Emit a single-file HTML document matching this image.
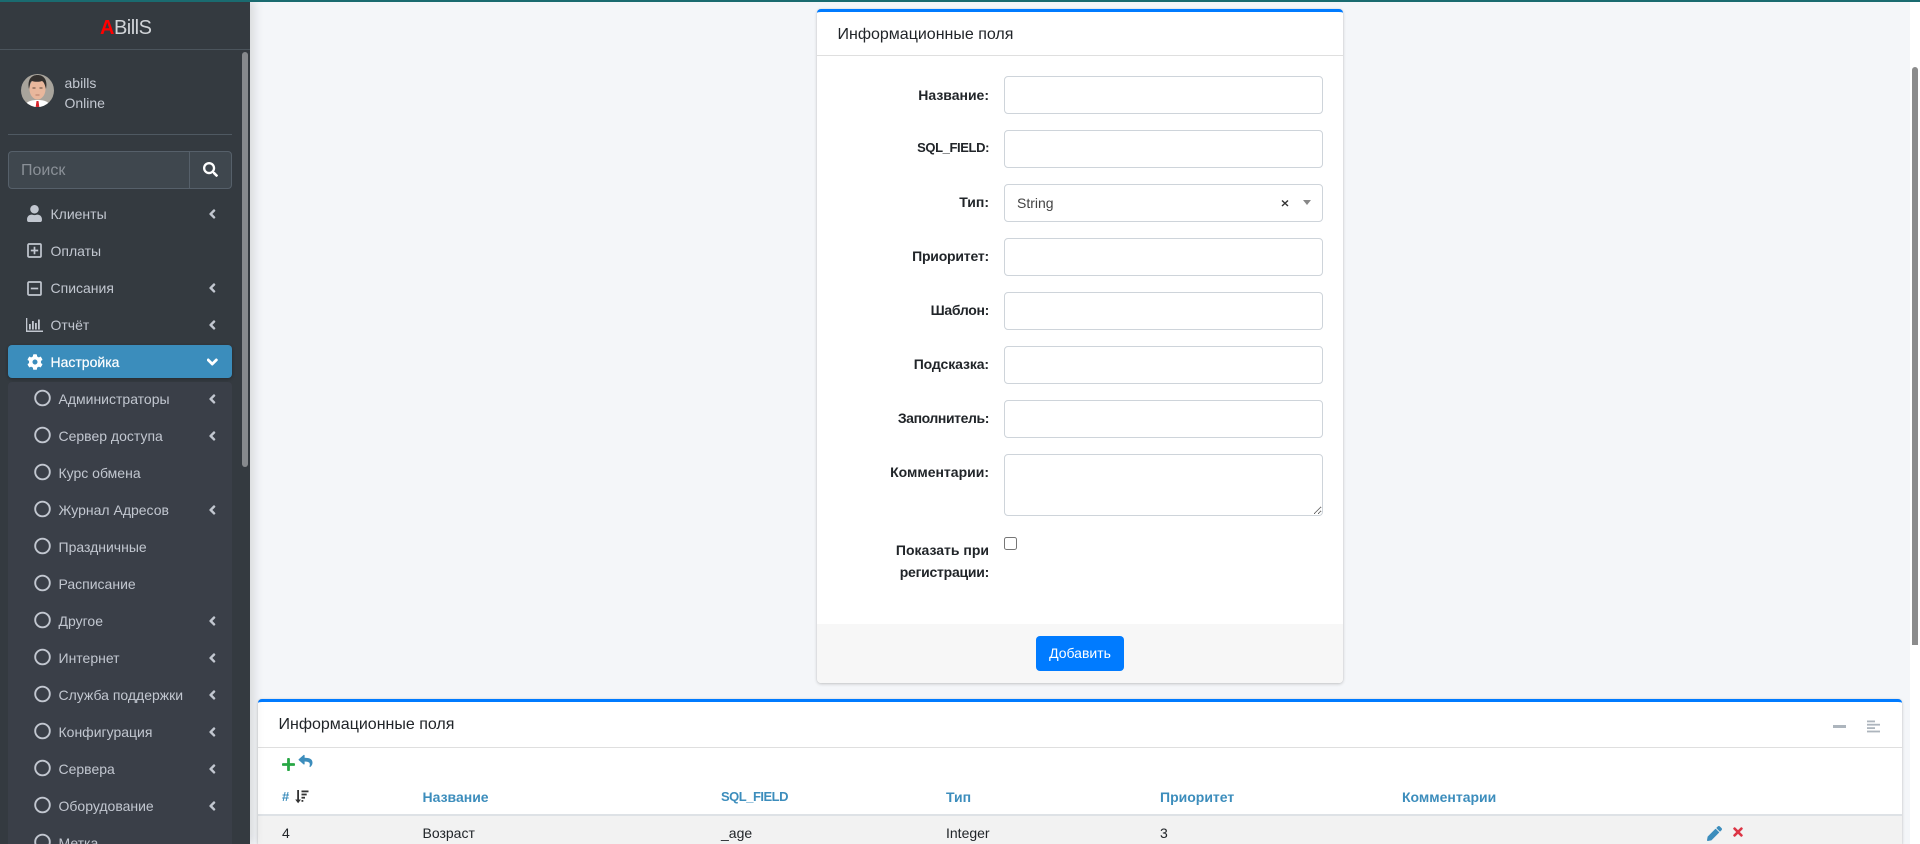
<!DOCTYPE html>
<html lang="ru"><head><meta charset="utf-8"><title>ABillS</title>
<style>
*{box-sizing:border-box}
html,body{margin:0;padding:0;width:1920px;height:844px;overflow:hidden;background:#f4f6f9;font-family:"Liberation Sans","Noto Sans CJK SC",sans-serif;font-size:14px;color:#212529}
#root{position:absolute;left:0;top:0;width:1920px;height:844px;overflow:hidden;background:#f4f6f9}
.a{position:absolute}
.t{position:absolute;white-space:nowrap;line-height:20px;height:20px}
#top{position:absolute;left:0;top:0;width:1920px;height:2px;background:#1a6b70;z-index:9}
#sb{position:absolute;left:0;top:0;width:250px;height:844px;background:#343a40;box-shadow:4px 0 10px rgba(0,0,0,.12);overflow:hidden;color:#c2c7d0}
#track{position:absolute;left:1910px;top:0;width:10px;height:844px;background:#fff}
#thumb{position:absolute;left:1912px;top:67px;width:6px;height:578px;background:#8c8c8c;border-radius:3px 3px 0 0}
.lb{position:absolute;right:931px;text-align:right;font-weight:700;white-space:nowrap;line-height:22px}
.in{position:absolute;left:1004px;width:318.5px;height:38px;border:1px solid #ced4da;border-radius:4px;background:#fff;padding:0;margin:0}
.th{position:absolute;top:787px;font-weight:700;color:#3c8dbc;line-height:20px;white-space:nowrap}
.td{position:absolute;top:823px;line-height:20px;white-space:nowrap}
.card{position:absolute;background:#fff;border-top:3px solid #007bff;border-radius:4px;box-shadow:0 0 1px rgba(0,0,0,.125),0 1px 3px rgba(0,0,0,.2)}
svg{position:absolute;display:block}
</style></head><body>
<div id="root">
<div id="top"></div>

<!-- card 1 -->
<div class="card" style="left:817px;top:9px;width:526px;height:674px"></div>
<div class="a" style="left:817px;top:55px;width:526px;height:1px;background:#dfdfdf"></div>
<div class="t" style="left:837.5px;top:25px;font-size:16px;color:#212529">Информационные поля</div>
<div class="lb" style="top:84px">Название:</div>
<div class="lb" style="top:137px;font-size:13px;letter-spacing:-.4px">SQL_FIELD:</div>
<div class="lb" style="top:191px">Тип:</div>
<div class="lb" style="top:245px;letter-spacing:-.2px">Приоритет:</div>
<div class="lb" style="top:299px;letter-spacing:-.3px">Шаблон:</div>
<div class="lb" style="top:353px;letter-spacing:-.1px">Подсказка:</div>
<div class="lb" style="top:407px;letter-spacing:-.4px">Заполнитель:</div>
<div class="lb" style="top:461px">Комментарии:</div>
<div class="lb" style="top:539px">Показать при</div>
<div class="lb" style="top:561px;letter-spacing:-.25px">регистрации:</div>
<input class="in" style="top:76px">
<input class="in" style="top:130px">
<div class="in" style="top:184px"></div>
<div class="t" style="left:1017px;top:193px;color:#444">String</div>
<svg style="left:1281px;top:199px" width="8" height="8" viewBox="0 0 8 8"><path d="M1 1.5L7 7M7 1.5L1 7" stroke="#333" stroke-width="1.4"/></svg>
<svg style="left:1303px;top:200px" width="8" height="5" viewBox="0 0 8 5"><path d="M0 0H8L4 5Z" fill="#888"/></svg>
<input class="in" style="top:238px">
<input class="in" style="top:292px">
<input class="in" style="top:346px">
<input class="in" style="top:400px">
<textarea class="in" style="top:454px;height:62px"></textarea>
<input type="checkbox" class="a" style="left:1004px;top:537px;width:13px;height:13px;margin:0">
<div class="a" style="left:817px;top:624px;width:526px;height:59px;background:#f7f7f7;border-radius:0 0 4px 4px"></div>
<div class="a" style="left:1036px;top:636px;width:88px;height:35px;background:#007bff;border-radius:4px;color:#fff;text-align:center;line-height:35px">Добавить</div>

<!-- card 2 -->
<div class="card" style="left:258px;top:699px;width:1644px;height:145px;border-radius:4px 4px 0 0"></div>
<div class="a" style="left:258px;top:747px;width:1644px;height:1px;background:#dfdfdf"></div>
<div class="t" style="left:278.5px;top:715px;font-size:16px">Информационные поля</div>
<div class="a" style="left:1833px;top:725px;width:13px;height:3px;background:#adb5bd"></div>
<svg style="left:1867px;top:720px" width="13" height="13" viewBox="0 0 13 13" fill="#adb5bd"><rect x="0" y="0.5" width="8" height="1.8"/><rect x="0" y="3.8" width="13" height="1.8"/><rect x="0" y="7.2" width="8" height="1.8"/><rect x="0" y="10.6" width="13" height="1.8"/></svg>
<svg style="left:282px;top:757px" width="13" height="15" viewBox="0 0 448 512"><path fill="#28a745" d="M416 208H272V64c0-17.67-14.33-32-32-32h-32c-17.67 0-32 14.33-32 32v144H32c-17.67 0-32 14.33-32 32v32c0 17.67 14.33 32 32 32h144v144c0 17.67 14.33 32 32 32h32c17.67 0 32-14.33 32-32V304h144c17.67 0 32-14.33 32-32v-32c0-17.67-14.33-32-32-32z"/></svg>
<svg style="left:298px;top:754px" width="15" height="14" viewBox="0 0 512 512"><path fill="#3c8dbc" d="M8.309 189.836L184.313 37.851C199.719 24.546 224 35.347 224 56.015v80.053c160.629 1.839 288 34.032 288 186.258 0 61.441-39.581 122.309-83.333 154.132-13.653 9.931-33.111-2.533-28.077-18.631 45.344-145.012-21.507-183.51-176.59-185.742V360c0 20.7-24.3 31.453-39.687 18.164l-176.004-152c-11.071-9.562-11.086-26.753 0-36.328z"/></svg>
<div class="th" style="left:282px;font-size:13px">#</div>
<svg style="left:295px;top:790px" width="14" height="14" viewBox="0 0 14 14" fill="#333"><path d="M2.2 0h1.8v9.5h2L3.1 13.2 0.2 9.5h2z"/><rect x="6.5" y="0.5" width="7" height="1.8"/><rect x="6.5" y="3.6" width="5.2" height="1.8"/><rect x="6.5" y="6.8" width="3.5" height="1.8"/><rect x="6.5" y="10" width="1.8" height="1.8"/></svg>
<div class="th" style="left:422.5px">Название</div>
<div class="th" style="left:721px;font-size:13px;letter-spacing:-.5px">SQL_FIELD</div>
<div class="th" style="left:946px">Тип</div>
<div class="th" style="left:1160px">Приоритет</div>
<div class="th" style="left:1402px">Комментарии</div>
<div class="a" style="left:258px;top:814px;width:1644px;height:2px;background:#dee2e6"></div>
<div class="a" style="left:258px;top:816px;width:1644px;height:28px;background:#f2f2f2"></div>
<div class="td" style="left:282px">4</div>
<div class="td" style="left:422.5px">Возраст</div>
<div class="td" style="left:721px">_age</div>
<div class="td" style="left:946px">Integer</div>
<div class="td" style="left:1160px">3</div>
<svg style="left:1707px;top:826px" width="15" height="15" viewBox="0 0 512 512"><path fill="#3c8dbc" d="M497.9 142.1l-46.1 46.1c-4.7 4.7-12.3 4.7-17 0l-111-111c-4.7-4.7-4.7-12.3 0-17l46.1-46.1c18.7-18.7 49.1-18.7 67.9 0l60.1 60.1c18.8 18.7 18.8 49.1 0 67.9zM284.2 99.8L21.6 362.4.4 483.9c-2.9 16.4 11.4 30.6 27.8 27.8l121.5-21.3 262.6-262.6c4.7-4.7 4.7-12.3 0-17l-111-111c-4.8-4.7-12.4-4.7-17.1 0z"/></svg>
<svg style="left:1733px;top:825px" width="10" height="14" viewBox="0 0 352 512"><path fill="#dc3545" d="M242.72 256l100.07-100.07c12.28-12.28 12.28-32.19 0-44.48l-22.24-22.24c-12.28-12.28-32.19-12.28-44.48 0L176 189.28 75.93 89.21c-12.28-12.28-32.19-12.28-44.48 0L9.21 111.45c-12.28 12.28-12.28 32.19 0 44.48L109.28 256 9.21 356.07c-12.28 12.28-12.28 32.19 0 44.48l22.24 22.24c12.28 12.28 32.2 12.28 44.48 0L176 322.72l100.07 100.07c12.28 12.28 32.2 12.28 44.48 0l22.24-22.24c12.28-12.28 12.28-32.19 0-44.48L242.72 256z"/></svg>

<div id="track"></div><div id="thumb"></div>

<!-- sidebar -->
<div id="sb">
<div class="t" style="left:100px;top:16px;font-size:20px;line-height:24px;height:24px;color:#d0d3d7;letter-spacing:-.5px"><b style="color:#f00">A</b>BillS</div>
<div class="a" style="left:0;top:49px;width:250px;height:1px;background:#4b545c"></div>
<svg style="left:21px;top:74px" width="33" height="33" viewBox="0 0 33 33"><defs><clipPath id="c"><circle cx="16.5" cy="16.5" r="16.5"/></clipPath></defs><g clip-path="url(#c)"><rect width="33" height="33" fill="#a8a49c"/><path d="M3 33c2-6 8-7 13.5-7S28 27 30 33z" fill="#fff"/><path d="M15.5 27h2l.8 6h-3.6z" fill="#d8232a"/><ellipse cx="16.5" cy="15" rx="8" ry="10.5" fill="#e8b79c"/><path d="M8 15C6 5 11 1 16.5 1S27 5 25 15c-1-4-2-7-4-8-3 1-7 1-10 0-2 1-2 4-3 8z" fill="#33302e"/><path d="M11.5 14h3M18.5 14h3" stroke="#5a4538"/><path d="M14.5 21h4" stroke="#b67c68"/></g></svg>
<div class="t" style="left:64.5px;top:73px">abills</div>
<div class="t" style="left:64.5px;top:93px">Online</div>
<div class="a" style="left:8px;top:134px;width:224px;height:1px;background:#4f5962"></div>
<div class="a" style="left:8px;top:151px;width:224px;height:38px;background:#3f474e;border:1px solid #56606a;border-radius:4px"></div>
<div class="a" style="left:189px;top:152px;width:1px;height:36px;background:#56606a"></div>
<div class="t" style="left:21px;top:161px;font-size:16px;color:#8a9097">Поиск</div>
<svg style="left:203px;top:162px" width="15" height="15" viewBox="0 0 512 512"><path fill="#fff" d="M505 442.7L405.3 343c-4.5-4.5-10.6-7-17-7H372c27.6-35.3 44-79.7 44-128C416 93.1 322.9 0 208 0S0 93.1 0 208s93.1 208 208 208c48.3 0 92.7-16.4 128-44v16.3c0 6.4 2.5 12.5 7 17l99.7 99.7c9.4 9.4 24.6 9.4 33.9 0l28.3-28.3c9.4-9.4 9.4-24.6.1-34zM208 336c-70.7 0-128-57.2-128-128 0-70.7 57.2-128 128-128 70.7 0 128 57.2 128 128 0 70.7-57.2 128-128 128z"/></svg>

<svg style="left:27px;top:205px" width="15" height="17" viewBox="0 0 448 512"><path fill="#c2c7d0" d="M224 256c70.7 0 128-57.3 128-128S294.7 0 224 0 96 57.3 96 128s57.3 128 128 128zm89.6 32h-16.7c-22.2 10.2-46.9 16-72.9 16s-50.6-5.8-72.9-16h-16.7C60.2 288 0 348.2 0 422.4V464c0 26.5 21.5 48 48 48h352c26.5 0 48-21.5 48-48v-41.6c0-74.2-60.2-134.4-134.4-134.4z"/></svg>
<div class="t" style="left:50.5px;top:204px">Клиенты</div>
<svg style="left:27px;top:243px" width="15" height="15" viewBox="0 0 15 15"><rect x="1" y="1" width="13" height="13" rx="1" fill="none" stroke="#c2c7d0" stroke-width="1.7"/><path d="M7.5 3.8v7.4M3.8 7.5h7.4" stroke="#c2c7d0" stroke-width="1.7"/></svg>
<div class="t" style="left:50.5px;top:241px">Оплаты</div>
<svg style="left:27px;top:281px" width="15" height="15" viewBox="0 0 15 15"><rect x="1" y="1" width="13" height="13" rx="1" fill="none" stroke="#c2c7d0" stroke-width="1.7"/><path d="M3.8 7.5h7.4" stroke="#c2c7d0" stroke-width="1.7"/></svg>
<div class="t" style="left:50.5px;top:278px">Списания</div>
<svg style="left:26px;top:318px" width="17" height="14" viewBox="0 0 17 14" fill="#c2c7d0"><rect x="0" y="0" width="1.3" height="14"/><rect x="0" y="12.5" width="17" height="1.5"/><rect x="3" y="6" width="1.8" height="5.5"/><rect x="6" y="3" width="1.8" height="8.5"/><rect x="9" y="5" width="1.8" height="6.5"/><rect x="12" y="1.5" width="1.8" height="10"/></svg>
<div class="t" style="left:50.5px;top:315px">Отчёт</div>

<div class="a" style="left:8px;top:345px;width:224px;height:33px;background:#3b8dbc;border-radius:4px;box-shadow:0 1px 3px rgba(0,0,0,.3)"></div>
<svg style="left:26.5px;top:354px" width="16" height="16" viewBox="0 0 512 512"><path fill="#fff" d="M487.4 315.7l-42.6-24.6c4.3-23.2 4.3-47 0-70.2l42.6-24.6c4.9-2.8 7.1-8.6 5.5-14-11.1-35.6-30-67.8-54.7-94.6-3.8-4.1-10-5.1-14.8-2.3L380.8 110c-17.9-15.4-38.5-27.3-60.8-35.1V25.8c0-5.6-3.9-10.5-9.4-11.7-36.7-8.2-74.3-7.8-109.2 0-5.5 1.2-9.4 6.1-9.4 11.7V75c-22.2 7.9-42.8 19.8-60.8 35.1L88.7 85.5c-4.9-2.8-11-1.9-14.8 2.3-24.7 26.7-43.6 58.9-54.7 94.6-1.7 5.4.6 11.2 5.5 14L67.3 221c-4.3 23.2-4.3 47 0 70.2l-42.6 24.6c-4.9 2.8-7.1 8.6-5.5 14 11.1 35.6 30 67.8 54.7 94.6 3.8 4.1 10 5.1 14.8 2.3l42.6-24.6c17.9 15.4 38.5 27.3 60.8 35.1v49.2c0 5.6 3.9 10.5 9.4 11.7 36.7 8.2 74.3 7.8 109.2 0 5.5-1.2 9.4-6.1 9.4-11.7v-49.2c22.2-7.9 42.8-19.8 60.8-35.1l42.6 24.6c4.9 2.8 11 1.9 14.8-2.3 24.7-26.7 43.6-58.9 54.7-94.6 1.5-5.5-.7-11.3-5.6-14.1zM256 336c-44.1 0-80-35.9-80-80s35.9-80 80-80 80 35.9 80 80-35.9 80-80 80z"/></svg>
<div class="t" style="left:50.5px;top:352px;color:#fff;font-weight:500;-webkit-text-stroke:.2px #fff">Настройка</div>
<svg style="left:207px;top:356px" width="10.5" height="12" viewBox="0 0 448 512"><path fill="#fff" stroke="#fff" stroke-width="40" d="M207.029 381.476L12.686 187.132c-9.373-9.373-9.373-24.569 0-33.941l22.667-22.667c9.357-9.357 24.522-9.375 33.901-.04L224 284.505l154.745-154.021c9.379-9.335 24.544-9.317 33.901.04l22.667 22.667c9.373 9.373 9.373 24.569 0 33.941L240.971 381.476c-9.373 9.372-24.569 9.372-33.942 0z"/></svg>

<div class="a" style="left:8px;top:382px;width:224px;height:470px;background:#3a3f48;border-radius:4px 4px 0 0"></div>

<svg style="left:0;top:0" width="250" height="844" viewBox="0 0 250 844"><defs>
<path id="cl" d="M34.52 239.03L228.87 44.69c9.37-9.37 24.57-9.37 33.94 0l22.67 22.67c9.36 9.36 9.37 24.52.04 33.9L131.49 256l154.02 154.75c9.34 9.38 9.32 24.54-.04 33.9l-22.67 22.67c-9.37 9.37-24.57 9.37-33.94 0L34.52 272.97c-9.37-9.37-9.37-24.57 0-33.94z" fill="#c2c7d0" stroke="#c2c7d0" stroke-width="45"/>
<g id="ch"><use href="#cl" transform="translate(209.2,-5) scale(.0195)"/></g>
<circle id="o" cx="42.5" cy="0" r="7.3" fill="none" stroke="#c2c7d0" stroke-width="1.9"/>
</defs>
<g transform="translate(0,214)"><use href="#ch"/></g>
<g transform="translate(0,288)"><use href="#ch"/></g>
<g transform="translate(0,325)"><use href="#ch"/></g>
<g transform="translate(0,399)"><use href="#ch"/></g>
<g transform="translate(0,436)"><use href="#ch"/></g>
<g transform="translate(0,510)"><use href="#ch"/></g>
<g transform="translate(0,621)"><use href="#ch"/></g>
<g transform="translate(0,658)"><use href="#ch"/></g>
<g transform="translate(0,695)"><use href="#ch"/></g>
<g transform="translate(0,732)"><use href="#ch"/></g>
<g transform="translate(0,769)"><use href="#ch"/></g>
<g transform="translate(0,806)"><use href="#ch"/></g>
<use href="#o" y="398"/><use href="#o" y="435"/><use href="#o" y="472"/><use href="#o" y="509"/><use href="#o" y="546"/><use href="#o" y="583"/><use href="#o" y="620"/><use href="#o" y="657"/><use href="#o" y="694"/><use href="#o" y="731"/><use href="#o" y="768"/><use href="#o" y="805"/><use href="#o" y="842"/>
</svg>
<div class="t" style="left:58.5px;top:389px">Администраторы</div>
<div class="t" style="left:58.5px;top:426px">Сервер доступа</div>
<div class="t" style="left:58.5px;top:463px">Курс обмена</div>
<div class="t" style="left:58.5px;top:500px">Журнал Адресов</div>
<div class="t" style="left:58.5px;top:537px">Праздничные</div>
<div class="t" style="left:58.5px;top:574px">Расписание</div>
<div class="t" style="left:58.5px;top:611px">Другое</div>
<div class="t" style="left:58.5px;top:648px">Интернет</div>
<div class="t" style="left:58.5px;top:685px">Служба поддержки</div>
<div class="t" style="left:58.5px;top:722px">Конфигурация</div>
<div class="t" style="left:58.5px;top:759px">Сервера</div>
<div class="t" style="left:58.5px;top:796px">Оборудование</div>
<div class="t" style="left:58.5px;top:833px">Метка</div>
<div class="a" style="left:242px;top:52px;width:6px;height:415px;background:#86898d;border-radius:3px"></div>
</div>
</div>
</body></html>
